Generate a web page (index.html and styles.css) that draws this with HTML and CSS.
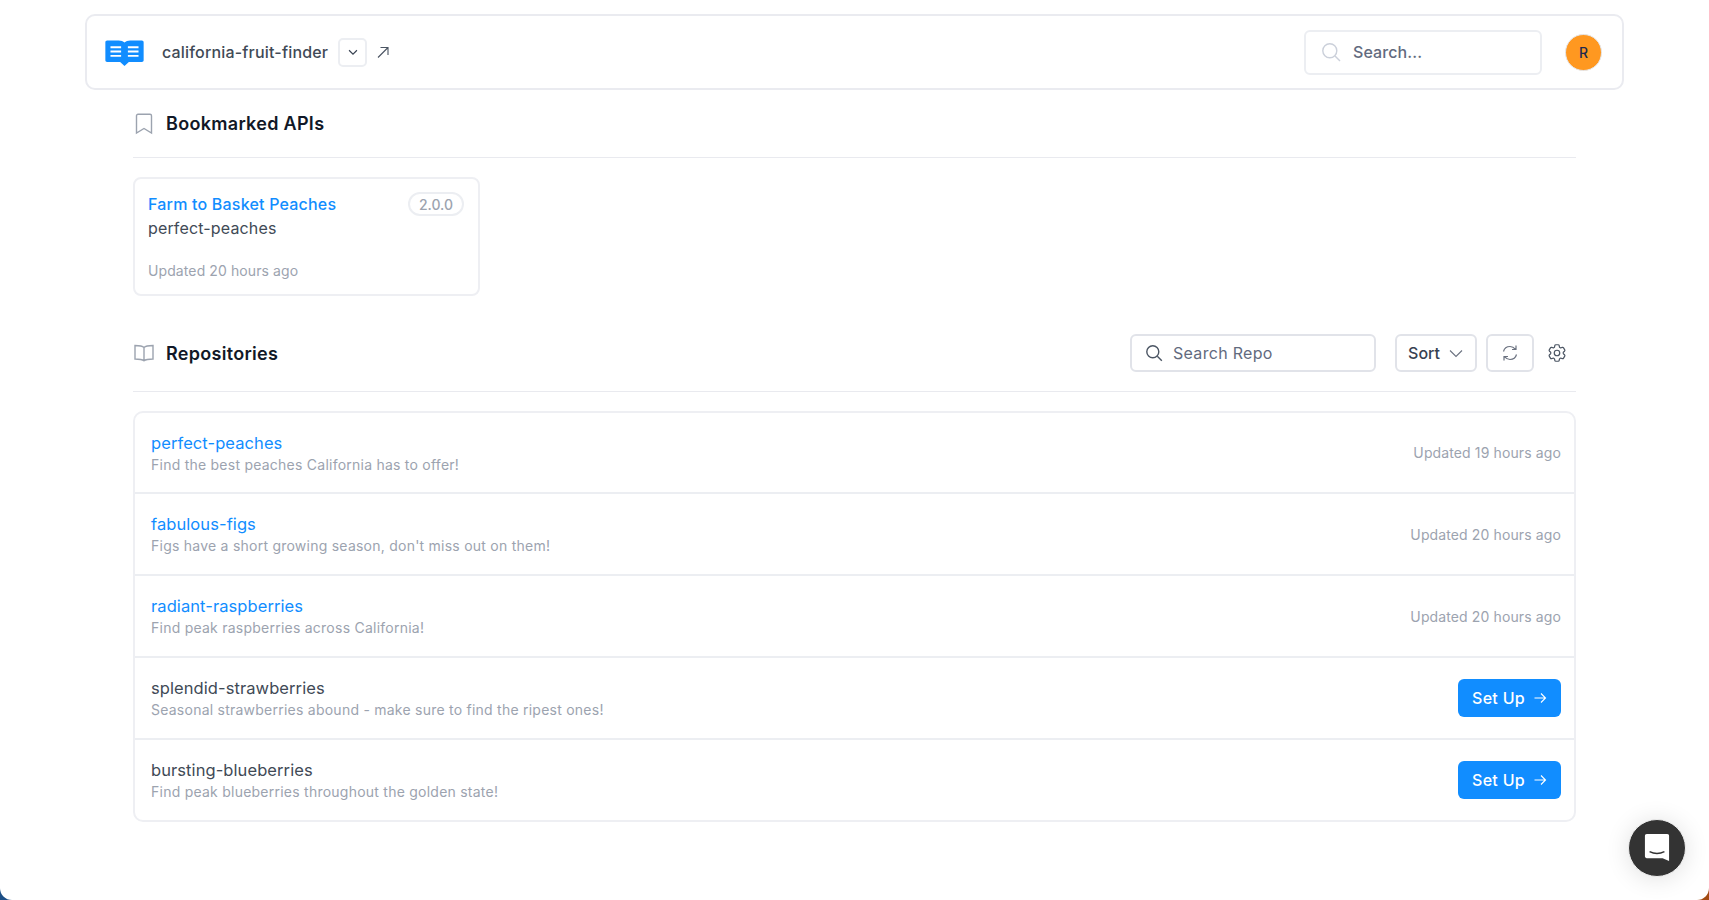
FILE: index.html
```html
<!DOCTYPE html>
<html lang="en">
<head>
<meta charset="utf-8">
<title>california-fruit-finder</title>
<link rel="stylesheet" href="styles.css">
</head>
<body>
<div class="app">
  <header class="topbar">
    <div class="brand">
      <svg class="logo" viewBox="0 0 40 30" width="40" height="30"><path d="M2 2.500h12c2.600 0 4.600.8 6 2.200 1.400-1.400 3.400-2.200 6-2.200h12c1 0 1.800.8 1.800 1.800V23c0 1-.8 1.800-1.800 1.800H24.500L20 29l-4.500-4.200H2C1 24.800.2 24 .2 23V4.300C.2 3.300 1 2.500 2 2.500z" fill="#118dff"/><path d="M5.500 9.500h11M5.500 14h11M5.500 18.500h11M23.500 9.500h11M23.500 14h11M23.500 18.500h11" stroke="#fff" stroke-width="2"/></svg>
      <span class="project">california-fruit-finder</span>
      <button class="chev-btn"><svg viewBox="0 0 16 16" width="14" height="14"><path d="M3.500 6l4.500 4.500L12.500 6" fill="none" stroke="#374151" stroke-width="1.300"/></svg></button>
      <svg class="ext" viewBox="0 0 14 14" width="14" height="14"><path d="M2 12.500L12 2.500M4.500 2.500H12V10" fill="none" stroke="#4b5563" stroke-width="1.100"/></svg>
    </div>
    <div class="top-right">
      <div class="top-search">
        <svg viewBox="0 0 20 20" width="20" height="20"><circle cx="8.800" cy="8.800" r="7" fill="none" stroke="#cbd0da" stroke-width="1.400"/><path d="M14 14l5 5" stroke="#cbd0da" stroke-width="1.400"/></svg>
        <span>Search...</span>
      </div>
      <div class="avatar">R</div>
    </div>
  </header>

  <main class="content">
    <section class="heading first">
      <svg class="head-icon" viewBox="0 0 20 22" width="20" height="22"><path d="M2.500 2.800c0-.9.700-1.500 1.500-1.500h12c.8 0 1.500.6 1.500 1.500V20L10 15.500 2.500 20z" fill="none" stroke="#9ca3af" stroke-width="1.400"/></svg>
      <h2>Bookmarked APIs</h2>
    </section>
    <a class="api-card">
      <div class="api-top"><span class="api-name">Farm to Basket Peaches</span><span class="version">2.0.0</span></div>
      <div class="api-slug">perfect-peaches</div>
      <div class="api-updated">Updated 20 hours ago</div>
    </a>

    <section class="heading repos">
      <svg class="head-icon" viewBox="0 0 20 18" width="20" height="18"><path d="M10 3.500C8.500 2 6 1.500 1 1.500v13.500c5 0 7.500.5 9 1.800 1.500-1.300 4-1.800 9-1.800V1.500c-5 0-7.500.5-9 2zM10 3.500v13.300" fill="none" stroke="#9ca3af" stroke-width="1.400"/></svg>
      <h2>Repositories</h2>
      <div class="tools">
        <div class="repo-search">
          <svg viewBox="0 0 18 18" width="18" height="18"><circle cx="7.800" cy="7.800" r="6" fill="none" stroke="#4b5563" stroke-width="1.400"/><path d="M12.300 12.300l4.500 4.500" stroke="#4b5563" stroke-width="1.400"/></svg>
          <span>Search Repo</span>
        </div>
        <button class="sort">Sort<svg viewBox="0 0 16 16" width="16" height="16"><path d="M2 5.500l6 6 6-6" fill="none" stroke="#6b7280" stroke-width="1.100"/></svg></button>
        <button class="refresh"><svg viewBox="0 0 20 20" width="20" height="20"><path d="M3.500 8.500C4.300 5.400 6.900 3.500 10 3.500c2.300 0 4 1 5.500 2.800M16.500 11.500c-.8 3.100-3.400 5-6.500 5-2.300 0-4-1-5.500-2.800M16 2.500v4h-4M4 17.500v-4h4" fill="none" stroke="#6b7280" stroke-width="1.200"/></svg></button>
        <svg class="gear" viewBox="0 0 24 24" width="22" height="22"><path d="M9.594 3.940c.09-.542.56-.94 1.110-.94h2.593c.55 0 1.020.398 1.110.94l.213 1.281c.063.374.313.686.645.870.074.040.147.083.220.127.324.196.720.257 1.075.124l1.217-.456a1.125 1.125 0 0 1 1.370.490l1.296 2.247a1.125 1.125 0 0 1-.260 1.431l-1.003.827c-.293.240-.438.613-.431.992a6.759 6.759 0 0 1 0 .255c-.007.378.138.750.430.990l1.005.828c.424.350.534.954.260 1.430l-1.298 2.247a1.125 1.125 0 0 1-1.369.491l-1.217-.456c-.355-.133-.750-.072-1.076.124a6.570 6.570 0 0 1-.220.128c-.331.183-.581.495-.644.869l-.213 1.280c-.09.543-.560.941-1.110.941h-2.594c-.550 0-1.020-.398-1.110-.940l-.213-1.281c-.062-.374-.312-.686-.644-.870a6.520 6.520 0 0 1-.220-.127c-.325-.196-.720-.257-1.076-.124l-1.217.456a1.125 1.125 0 0 1-1.369-.490l-1.297-2.247a1.125 1.125 0 0 1 .260-1.431l1.004-.827c.292-.240.437-.613.430-.992a6.932 6.932 0 0 1 0-.255c.007-.378-.138-.750-.430-.990l-1.004-.828a1.125 1.125 0 0 1-.260-1.430l1.297-2.247a1.125 1.125 0 0 1 1.370-.491l1.216.456c.356.133.751.072 1.076-.124.072-.044.146-.087.220-.128.332-.183.582-.495.644-.869l.214-1.281z" fill="none" stroke="#4b5563" stroke-width="1.300"/><circle cx="12" cy="12" r="3" fill="none" stroke="#4b5563" stroke-width="1.300"/></svg>
      </div>
    </section>

    <div class="repo-list">
      <div class="repo-row">
        <div class="repo-text"><div class="repo-name link">perfect-peaches</div><div class="repo-desc">Find the best peaches California has to offer!</div></div>
        <span class="updated">Updated 19 hours ago</span>
      </div>
      <div class="repo-row">
        <div class="repo-text"><div class="repo-name link">fabulous-figs</div><div class="repo-desc">Figs have a short growing season, don't miss out on them!</div></div>
        <span class="updated">Updated 20 hours ago</span>
      </div>
      <div class="repo-row">
        <div class="repo-text"><div class="repo-name link">radiant-raspberries</div><div class="repo-desc">Find peak raspberries across California!</div></div>
        <span class="updated">Updated 20 hours ago</span>
      </div>
      <div class="repo-row">
        <div class="repo-text"><div class="repo-name">splendid-strawberries</div><div class="repo-desc">Seasonal strawberries abound - make sure to find the ripest ones!</div></div>
        <button class="setup">Set Up<svg viewBox="0 0 14 14" width="14" height="14"><path d="M1.500 7h11M8 2.500L12.500 7 8 11.500" fill="none" stroke="#fff" stroke-width="1.100"/></svg></button>
      </div>
      <div class="repo-row">
        <div class="repo-text"><div class="repo-name">bursting-blueberries</div><div class="repo-desc">Find peak blueberries throughout the golden state!</div></div>
        <button class="setup">Set Up<svg viewBox="0 0 14 14" width="14" height="14"><path d="M1.500 7h11M8 2.500L12.500 7 8 11.500" fill="none" stroke="#fff" stroke-width="1.100"/></svg></button>
      </div>
    </div>
  </main>

  <button class="chat"><svg viewBox="0 0 28 32" width="26" height="30"><path d="M3 1h22c1.300 0 2 .8 2 2v27l-7-3H3c-1.200 0-2-.8-2-2V3c0-1.200.8-2 2-2z" fill="#fff"/><path d="M6 20c5 2.400 11 2.400 16 0" fill="none" stroke="#333" stroke-width="1.500"/></svg></button>
</div>
</body>
</html>
```

FILE: styles.css
```css
* { box-sizing: border-box; }
html, body { margin: 0; height: 900px; overflow: hidden; }
body {
  background: linear-gradient(to right, #1c4f86 0%, #1c4f86 50%, #a34a12 50%, #a34a12 100%);
  font-family: Inter, "Liberation Sans", sans-serif;
  color: #374151;
}
button { font-family: inherit; background: #fff; cursor: pointer; padding: 0; }
svg { display: block; flex: none; }
.app {
  position: relative;
  height: 900px;
  background: #fff;
  border-radius: 0 0 12px 12px;
  padding: 14px 85px 0;
}
.topbar {
  height: 76px;
  border: 2px solid #eaebf0;
  border-radius: 10px;
  display: flex;
  align-items: center;
  justify-content: space-between;
  padding: 0 20px 0 18px;
}
.brand { display: flex; align-items: center; }
.logo { width: 39px; height: 29px; margin-top: 1px; }
.project { font-size: 16px; font-weight: 500; margin-left: 18px; color: #414a56; letter-spacing: .18px; }
.chev-btn {
  width: 29px; height: 29px; margin-left: 10px;
  border: 2px solid #eceef2; border-radius: 5px;
  display: flex; align-items: center; justify-content: center;
}
.ext { margin-left: 9px; }
.top-right { display: flex; align-items: center; gap: 23px; }
.top-search {
  width: 238px; height: 45px;
  border: 2px solid #eceef2; border-radius: 6px;
  display: flex; align-items: center; gap: 12px;
  padding-left: 15px;
  font-size: 16px; font-weight: 500; color: #626a7e;
  letter-spacing: .1px;
}
.avatar {
  width: 37px; height: 37px; border-radius: 50%;
  background: #ff9820; border: 1px solid #e5e7eb;
  display: flex; align-items: center; justify-content: center;
  font-size: 14px; font-weight: 500; color: #1f2a4d;
}
.content { padding: 0 48px; }
.heading {
  display: flex; align-items: center;
  border-bottom: 1.500px solid #e9eaef;
}
.heading h2 { margin: 0 0 0 12px; font-size: 18px; font-weight: 600; color: #111827; letter-spacing: .3px; }
.head-icon { margin-left: 1px; }
.heading.first { height: 68px; }
.api-card {
  display: block; width: 347px; height: 119px;
  margin-top: 19px;
  border: 2px solid #eeeff3; border-radius: 8px;
  padding: 13px 14px 13px 13px;
}
.api-top { display: flex; justify-content: space-between; align-items: center; }
.api-name { font-size: 16px; font-weight: 500; color: #118dff; letter-spacing: .2px; }
.version {
  height: 24px; width: 56px;
  border: 2px solid #eceef2; border-radius: 12px;
  font-size: 14px; font-weight: 500; color: #9ca3af;
  display: flex; align-items: center; justify-content: center;
}
.api-slug { font-size: 16px; margin-top: 2px; color: #414a56; line-height: 20px; letter-spacing: .15px; }
.api-updated { font-size: 14px; color: #9ca3af; margin-top: 24px; line-height: 18px; letter-spacing: .1px; }
.heading.repos { height: 96px; padding-top: 19px; }
.tools { margin-left: auto; display: flex; align-items: center; margin-right: 8px; }
.repo-search {
  width: 246px; height: 38px;
  border: 2px solid #e1e3e9; border-radius: 6px;
  display: flex; align-items: center; gap: 10px;
  padding-left: 13px;
  font-size: 16px; color: #626a7e;
  letter-spacing: .3px;
}
.sort {
  width: 82px; height: 38px; margin-left: 19px;
  border: 2px solid #e1e3e9; border-radius: 6px;
  display: flex; align-items: center; justify-content: center; gap: 8px;
  font-size: 16px; font-weight: 500; color: #374151;
}
.refresh {
  width: 48px; height: 38px; margin-left: 9px;
  border: 2px solid #e1e3e9; border-radius: 6px;
  display: flex; align-items: center; justify-content: center;
}
.gear { margin-left: 12px; }
.repo-list {
  margin-top: 19px;
  border: 2px solid #eeeff3; border-radius: 10px;
}
.repo-row {
  height: 82px;
  display: flex; align-items: center; justify-content: space-between;
  padding: 0 13px 0 16px;
  border-bottom: 2px solid #eceef2;
}
.repo-row:first-child { height: 81px; }
.repo-row:last-child { border-bottom: 0; height: 80px; }
.repo-text { padding-top: 1px; }
.repo-name { font-size: 16.500px; color: #414a56; line-height: 20px; letter-spacing: .08px; }
.repo-name.link { color: #118dff; }
.repo-desc { font-size: 14px; color: #9ca3af; line-height: 18px; margin-top: 3px; letter-spacing: .24px; }
.updated { font-size: 14px; color: #9ca3af; letter-spacing: .12px; }
.setup {
  width: 103px; height: 38px;
  background: #118dff; border: 0; border-radius: 6px;
  color: #fff; font-size: 16px; font-weight: 500; letter-spacing: .3px;
  display: flex; align-items: center; justify-content: center; gap: 8px;
}
.chat {
  position: absolute; left: 1628px; top: 819px;
  width: 58px; height: 58px; border-radius: 50%;
  background: #333; border: 1px solid #eee;
  box-shadow: 0 2px 24px rgba(0,0,0,.12);
  display: flex; align-items: center; justify-content: center;
}
```
